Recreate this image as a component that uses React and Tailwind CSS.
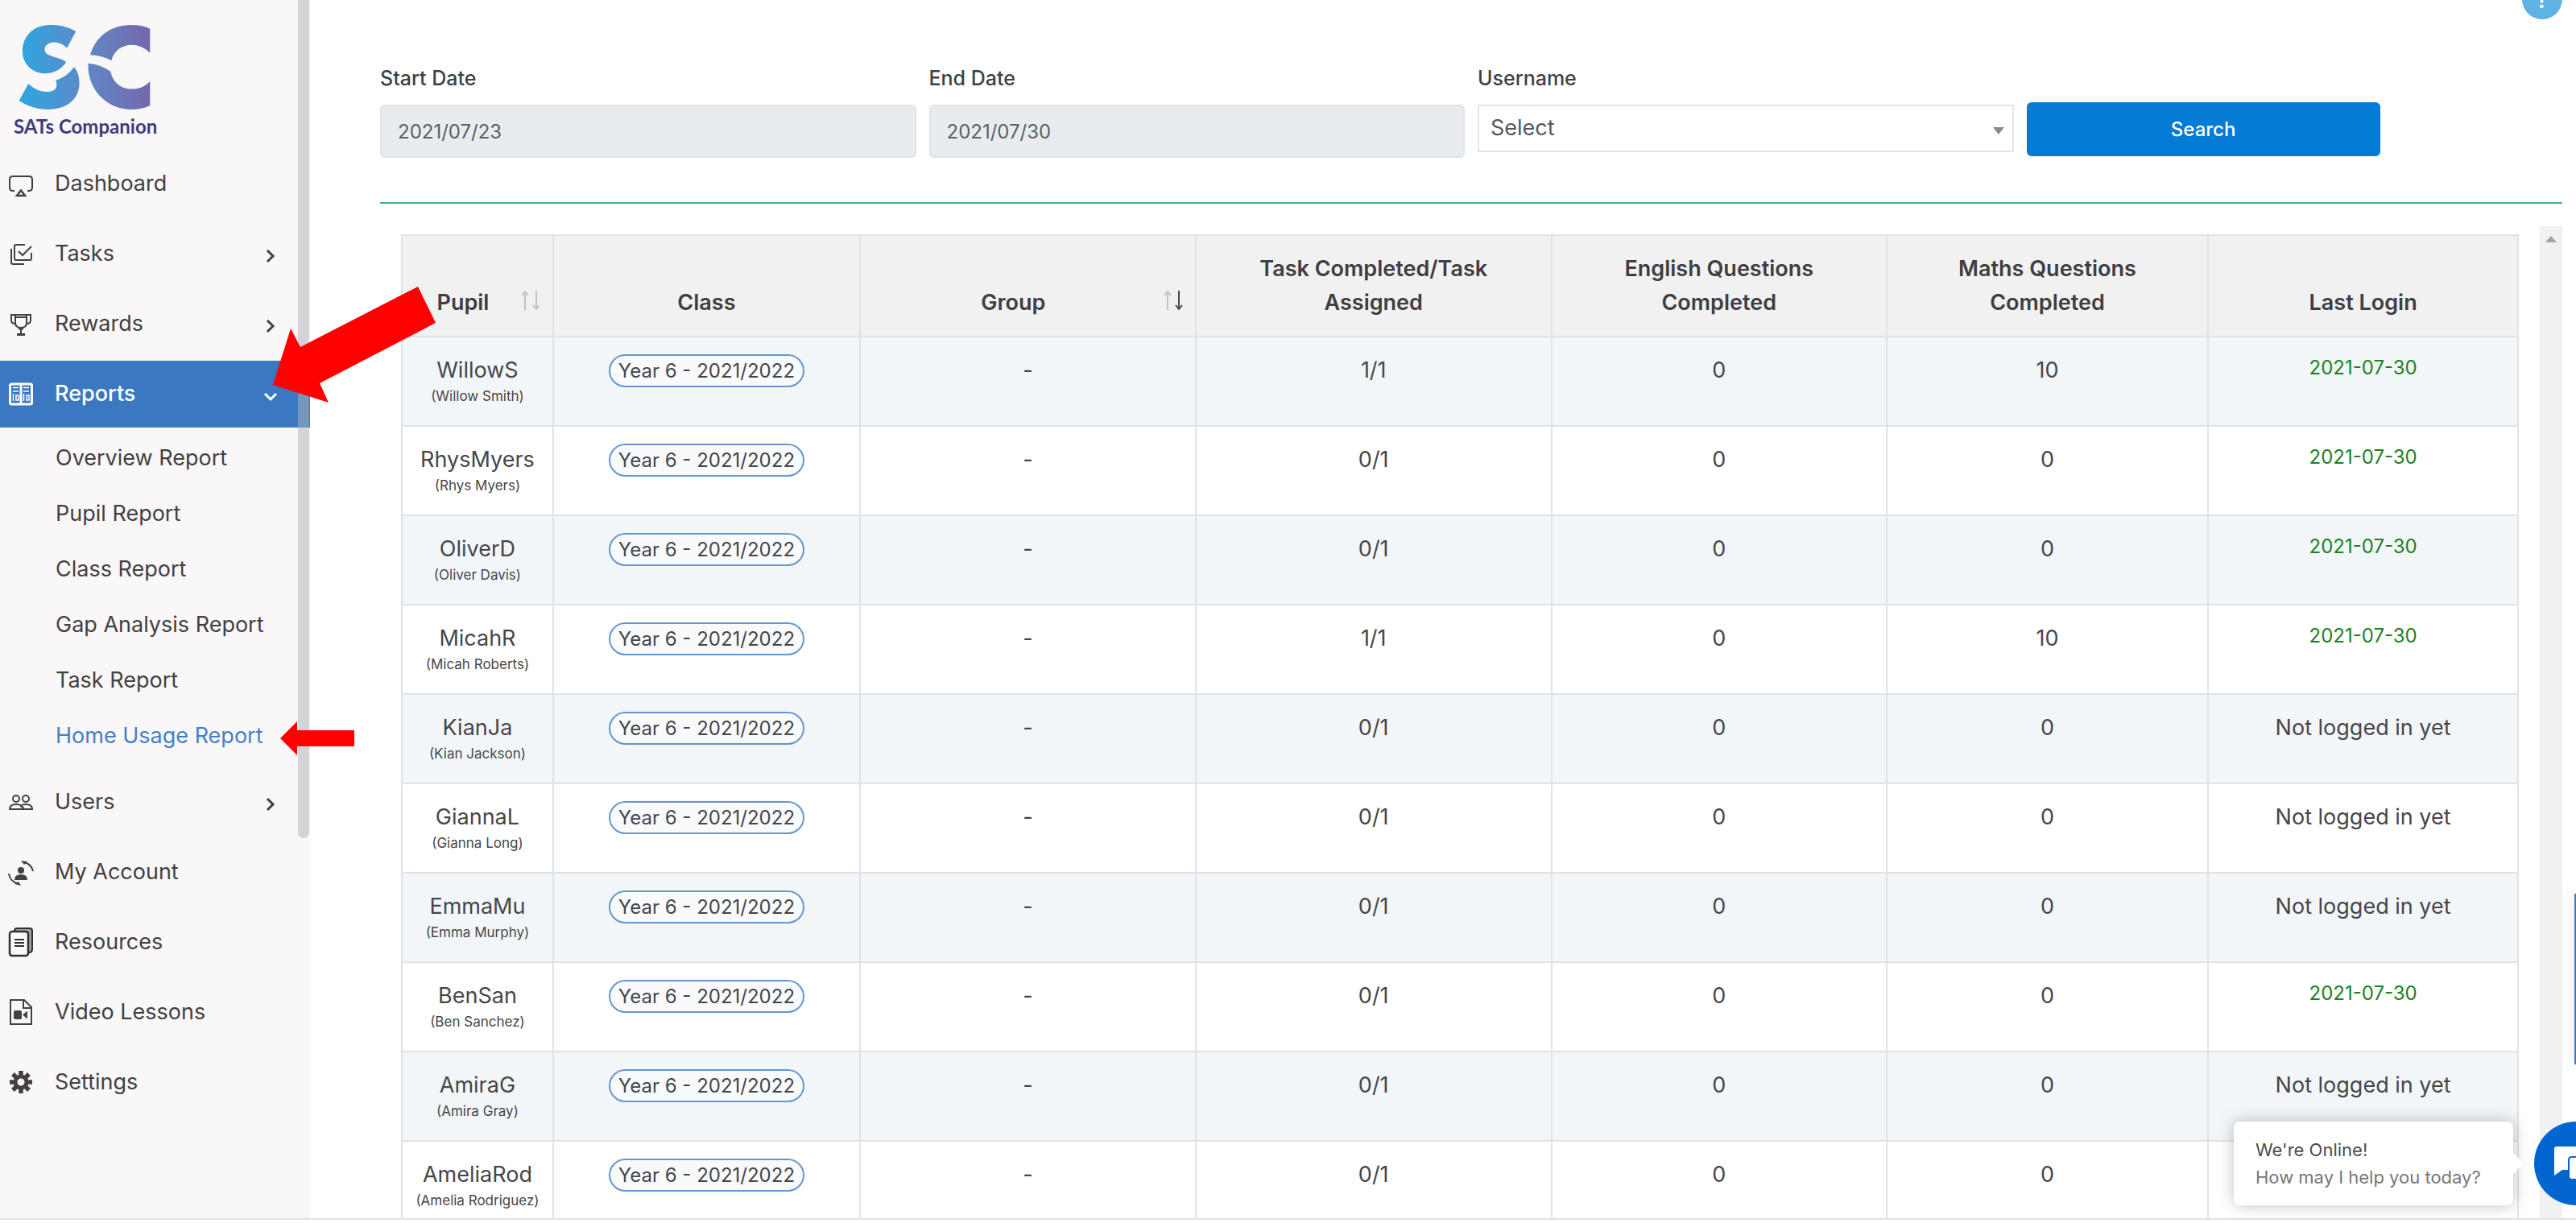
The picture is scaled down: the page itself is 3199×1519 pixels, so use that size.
import React from "react";

const pupils = [
  ["WillowS", "Willow Smith", "1/1", "0", "10", "2021-07-30"],
  ["RhysMyers", "Rhys Myers", "0/1", "0", "0", "2021-07-30"],
  ["OliverD", "Oliver Davis", "0/1", "0", "0", "2021-07-30"],
  ["MicahR", "Micah Roberts", "1/1", "0", "10", "2021-07-30"],
  ["KianJa", "Kian Jackson", "0/1", "0", "0", null],
  ["GiannaL", "Gianna Long", "0/1", "0", "0", null],
  ["EmmaMu", "Emma Murphy", "0/1", "0", "0", null],
  ["BenSan", "Ben Sanchez", "0/1", "0", "0", "2021-07-30"],
  ["AmiraG", "Amira Gray", "0/1", "0", "0", null],
  ["AmeliaRod", "Amelia Rodriguez", "0/1", "0", "0", ""],
];

const subReports = [
  "Overview Report",
  "Pupil Report",
  "Class Report",
  "Gap Analysis Report",
  "Task Report",
  "Home Usage Report",
];

function Icon({ children }) {
  return (
    <svg
      viewBox="0 0 30 30"
      className="size-[30px] shrink-0 overflow-visible"
      fill="none"
      stroke="currentColor"
      strokeWidth="2"
      aria-hidden="true"
    >
      {children}
    </svg>
  );
}

const DashboardIcon = () => (
  <Icon>
    <path d="M7 23H5q-4 0-4-4V9q0-4 4-4h20q4 0 4 4v10q0 4-4 4h-2" />
    <path d="M15 22.500l5 6.500H10z" strokeWidth="2.500" />
  </Icon>
);
const TasksIcon = () => (
  <Icon>
    <path d="M20 3H9q-2 0-2 2v15q0 2 2 2h17q2 0 2-2v-7" />
    <path d="M3 8v17q0 2 2 2h14M12 11l5 5 11-11" />
  </Icon>
);
const RewardsIcon = () => (
  <Icon>
    <path d="M8 3h14v10q0 6-7 6t-7-6zM8 6h14" />
    <path d="M8 3H3v7q0 4 5 4M22 3h5v7q0 4-5 4M12 19l3 3 3-3M15 22v4" />
    <path d="M10 27.500h10" strokeWidth="3" />
  </Icon>
);
const ReportsIcon = () => (
  <Icon>
    <rect x="1.500" y="2" width="27" height="25" rx="2" strokeWidth="3" />
    <path d="M15 2v25" strokeWidth="3" />
    <path d="M5 6.500h7M5 11h7M18 6.500h7M18 11h7" strokeWidth="1.500" />
    <path d="M5.500 14v9M9 16h3v6H9zM18.500 14v9M22 16h3v6h-3z" strokeWidth="1.500" />
  </Icon>
);
const UsersIcon = () => (
  <Icon>
    <circle cx="9" cy="10" r="4" />
    <circle cx="21" cy="10" r="4" />
    <path d="M1 23q0-6 8-6 5 0 6 2 1-2 6-2 8 0 8 6zM15 19q3 1 3 4" />
  </Icon>
);
const AccountIcon = () => (
  <Icon>
    <g fill="currentColor" stroke="none">
      <circle cx="15" cy="12" r="4" />
      <path d="M7 24q0-7 8-7t8 7zM15 0l8 1-4 4zM15 31l-8-2 5-3z" />
    </g>
    <path d="M20 2q8 3 10 11M10 28Q1 25 0 16" />
  </Icon>
);
const ResourcesIcon = () => (
  <Icon>
    <g stroke="#2f3133">
      <path d="M7 0q0-3 3-3h16q3 0 3 3v23q0 4-4 4" fill="#a3a3a3" />
      <rect x="1" y="1" width="23" height="30" rx="3" fill="#faf8f9" strokeWidth="2.500" />
      <path d="M7 11h12M7 15h12M7 19h12" />
    </g>
  </Icon>
);
const VideoIcon = () => (
  <Icon>
    <path d="M2-1h17l9 9v21H2zM18-1v10h10" />
    <rect x="6" y="12" width="10" height="11" rx="2" fill="currentColor" stroke="none" />
    <path d="M17 17.500l6-5v10z" fill="currentColor" stroke="none" />
  </Icon>
);
const SettingsIcon = () => (
  <Icon>
    <circle cx="15" cy="14" r="7" strokeWidth="5" />
    <g strokeWidth="5.500">
      <path d="M15 0v5M15 23v5M1 14h5M24 14h5M5 4l4 4M21 20l4 4M25 4l-4 4M9 20l-4 4" />
    </g>
  </Icon>
);

function Chevron({ down }) {
  return (
    <svg viewBox="0 0 20 20" className="mt-1 ml-auto size-5" fill="none" stroke="currentColor" strokeWidth="3" aria-hidden="true">
      {down ? <path d="M3 7l7 7 7-7" /> : <path d="M6 3l7 7-7 7" />}
    </svg>
  );
}

function NavLink({ icon, label }) {
  return (
    <a href="#" className="flex h-[83px] items-center gap-[27px] pr-11 pl-[11px]">
      {icon}
      <span>{label}</span>
    </a>
  );
}

function NavGroup({ icon, label, open }) {
  return (
    <button
      type="button"
      aria-expanded={!!open}
      className={
        open
          ? "flex h-[83px] w-full items-center gap-[27px] bg-[#3b78c1] pr-[39px] pl-[11px] text-left font-medium text-white"
          : "flex h-[83px] w-full items-center gap-[27px] pr-[39px] pl-[11px] text-left"
      }
    >
      {icon}
      <span>{label}</span>
      <Chevron down={open} />
    </button>
  );
}

function Logo() {
  return (
    <a href="#" className="block w-[180px] pt-[31px] pl-[17px]">
      <svg viewBox="72 33 490 315" className="ml-[7px] h-[105px] w-[163px]" aria-hidden="true">
        <defs>
          <linearGradient id="brand" gradientUnits="userSpaceOnUse" x1="85" y1="0" x2="550" y2="0">
            <stop offset="0" stopColor="#2fa5de" />
            <stop offset="0.450" stopColor="#5a8bc9" />
            <stop offset="0.600" stopColor="#6283c1" />
            <stop offset="1" stopColor="#7668ad" />
          </linearGradient>
        </defs>
        <g fill="url(#brand)">
          <path d="M283 57C250 38 220 33 185 33C125 33 84 75 84 130C84 180 120 212 165 214C200 214 228 200 247 171C225 155 200 154 180 144C158 132 163 100 200 97C220 97 235 105 250 118Z" />
          <path d="M106 252C130 275 155 283 178 282C212 281 216 260 208 239C235 232 258 215 276 190C290 205 296 225 296 250C296 310 250 348 180 348C140 348 100 335 71 315Z" />
          <path d="M337 145C355 80 410 33 490 33C515 33 540 37 560 47V137C540 117 515 107 492 107C455 107 423 130 416 166C392 153 365 146 337 145Z" />
          <path d="M329 176C360 178 390 190 413 207C420 245 450 272 492 272C520 272 542 262 560 243V333C540 343 515 348 490 348C400 348 325 275 329 176Z" />
        </g>
      </svg>
      <span className="mt-1 block h-[47px] font-['Lato',sans-serif] text-[24px] leading-[34px] font-bold whitespace-nowrap text-[#3f3a7d]">
        SATs Companion
      </span>
    </a>
  );
}

function Sidebar() {
  return (
    <aside className="relative w-[385px] shrink-0 bg-[#f9f7f8] text-[27px] text-[#444042]">
      <Logo />
      <nav className="flex flex-col gap-1">
        <NavLink icon={<DashboardIcon />} label="Dashboard" />
        <NavGroup icon={<TasksIcon />} label="Tasks" />
        <NavGroup icon={<RewardsIcon />} label="Rewards" />
        <NavGroup icon={<ReportsIcon />} label="Reports" open />
        <ul className="pb-0.5">
          {subReports.map((name) => (
            <li key={name}>
              <a
                href="#"
                className={
                  name === "Home Usage Report"
                    ? "flex h-[69px] items-center pl-[69px] text-[#467fc8]"
                    : "flex h-[69px] items-center pl-[69px]"
                }
              >
                {name}
              </a>
            </li>
          ))}
        </ul>
        <NavGroup icon={<UsersIcon />} label="Users" />
        <NavLink icon={<AccountIcon />} label="My Account" />
        <NavLink icon={<ResourcesIcon />} label="Resources" />
        <NavLink icon={<VideoIcon />} label="Video Lessons" />
        <NavLink icon={<SettingsIcon />} label="Settings" />
      </nav>
      <div className="absolute top-0 right-px h-[1041px] w-3.5 rounded-b-full bg-[#adb1b8]/50" />
    </aside>
  );
}

function Filters() {
  const label = "block text-[25px] leading-[34px] font-medium text-[#3a4248]";
  const field =
    "mt-4 block h-[66px] w-full rounded-md border-2 border-[#dce4ea] bg-[#e8ecef] px-5 text-[24px] text-[#5c5f63] outline-none";
  return (
    <form className="grid grid-cols-4 gap-4 border-b-2 border-[#3fae9f] pb-[55px]">
      <div>
        <label htmlFor="start" className={label}>Start Date</label>
        <input id="start" type="text" readOnly defaultValue="2021/07/23" className={field} />
      </div>
      <div>
        <label htmlFor="end" className={label}>End Date</label>
        <input id="end" type="text" readOnly defaultValue="2021/07/30" className={field} />
      </div>
      <div>
        <label htmlFor="user" className={label}>Username</label>
        <div className="relative mt-4">
          <select
            id="user"
            className="block h-[59px] w-full appearance-none border-2 border-[#dfe6ed] bg-white px-3.5 text-[27px] text-[#55585b]"
          >
            <option>Select</option>
          </select>
          <svg viewBox="0 0 14 9" className="pointer-events-none absolute top-7 right-3 h-[9px] w-3.5" aria-hidden="true">
            <path d="M0 0h14L7 9z" fill="#888" />
          </svg>
        </div>
      </div>
      <div>
        <button
          type="button"
          className="mt-[47px] h-[67px] w-[66%] rounded-md bg-[#047bd5] text-[24px] font-medium text-white"
        >
          Search
        </button>
      </div>
    </form>
  );
}

function SortArrows({ active }) {
  return (
    <svg viewBox="0 0 26 24" className="absolute right-3.5 bottom-8 h-6 w-[26px]" fill="none" strokeWidth="2" aria-hidden="true">
      <path d="M6 24V2M2 6l4-5 4 5" stroke="#c3c3c6" />
      <path d="M20 0v22M16 18l4 5 4-5" stroke={active ? "#4a4754" : "#c3c3c6"} />
    </svg>
  );
}

function ReportTable() {
  const th = "relative border-2 border-[#dfe3e8] px-4 py-5 text-center align-bottom leading-[42px] font-semibold";
  const td = "border-2 border-[#dfe3e8] pt-[21px] text-center align-top leading-10";
  return (
    <table className="w-full table-fixed border-collapse text-[27px] text-[#46464a]">
      <colgroup>
        <col className="w-[7.15%]" />
        <col className="w-[14.5%]" />
        <col className="w-[15.86%]" />
        <col className="w-[16.82%]" />
        <col className="w-[15.83%]" />
        <col className="w-[15.2%]" />
        <col className="w-[14.64%]" />
      </colgroup>
      <thead className="bg-[#f1f1f1] text-[#403d42]">
        <tr>
          <th className={th}>
            <span className="pr-9">Pupil</span>
            <SortArrows />
          </th>
          <th className={th}>Class</th>
          <th className={th}>
            <span className="pr-9">Group</span>
            <SortArrows active />
          </th>
          <th className={th}>Task Completed/Task<br />Assigned</th>
          <th className={th}>English Questions<br />Completed</th>
          <th className={th}>Maths Questions<br />Completed</th>
          <th className={th}>Last Login</th>
        </tr>
      </thead>
      <tbody>
        {pupils.map(([user, name, tasks, english, maths, login]) => (
          <tr key={user} className="h-[111px] odd:bg-[#f2f6f9]">
            <td className={td}>
              {user}
              <span className="block text-[17px] leading-6 whitespace-nowrap">({name})</span>
            </td>
            <td className={td}>
              <span className="inline-block rounded-full border-2 border-[#6496d0] bg-[#f8fafc] px-2.5 align-top text-[24px] leading-[37px] whitespace-nowrap">
                Year 6 - 2021/2022
              </span>
            </td>
            <td className={td}>-</td>
            <td className={td}>{tasks}</td>
            <td className={td}>{english}</td>
            <td className={td}>{maths}</td>
            <td className={td}>
              {login === null ? (
                "Not logged in yet"
              ) : (
                <span className="block text-[24px] leading-[34px] text-[#1c811f]">{login}</span>
              )}
            </td>
          </tr>
        ))}
      </tbody>
    </table>
  );
}

function ChatWidget() {
  return (
    <div>
      <div className="absolute right-[78px] bottom-4 w-[347px] rounded-lg bg-white px-[27px] py-[18px] shadow-[0_0_20px_rgba(0,0,0,0.25)]">
        <div className="absolute top-10 -right-2 size-6 rotate-45 bg-white" />
        <p className="text-[22px] leading-[34px] text-[#4d4d4d]">We're Online!</p>
        <p className="text-[22px] leading-[34px] whitespace-nowrap text-[#777]">How may I help you today?</p>
      </div>
      <button
        type="button"
        aria-label="Open chat"
        className="absolute -right-[52px] bottom-4 size-[104px] rounded-full bg-[#0365d0]"
      >
        <svg viewBox="0 0 104 104" className="size-full" aria-hidden="true">
          <path d="M25 34q0-3 3-3h34v29H35l-10 7z" fill="#fff" />
          <path d="M43 48q0-4 4-4h28v33l-9-5H47q-4 0-4-4z" fill="#fff" stroke="#0365d0" strokeWidth="2" />
        </svg>
      </button>
    </div>
  );
}

export default function App() {
  return (
    <div className="relative flex h-screen flex-col overflow-hidden bg-white pb-1 font-['Inter',sans-serif]">
      <div className="relative flex min-h-0 flex-1 overflow-hidden border-b-2 border-[#e0e0e6]">
        <Sidebar />
        <main className="flex min-w-0 flex-1 flex-col pt-20 pr-[17px] pl-[87px]">
          <Filters />
          <div className="mt-7 flex min-h-0 flex-1">
            <div className="min-w-0 flex-1 overflow-hidden px-[26px] pt-2.5">
              <ReportTable />
            </div>
            <div className="w-7 bg-[#f1f1f1] pt-3">
              <svg viewBox="0 0 14 8" className="mx-auto h-2 w-3.5" aria-hidden="true">
                <path d="M7 0l7 8H0z" fill="#a3a3a3" />
              </svg>
            </div>
          </div>
        </main>
        <button
          type="button"
          aria-label="Help"
          className="absolute -top-[26px] right-[17px] flex size-[50px] items-center justify-center rounded-full bg-[#5fb3e3] text-[30px] font-medium text-white"
        >
          ?
        </button>
        <div className="absolute top-[1110px] right-0 h-[212px] w-0.5 bg-[#4179bd] shadow-[0_0_16px_rgba(0,0,0,0.35)]" />
        <ChatWidget />
      </div>
      <svg viewBox="0 0 202 144" className="absolute top-[356px] left-[339px] h-[144px] w-[202px]" aria-hidden="true">
        <path d="M180 0l22 45L58 120l11 24L0 122 22 52l12 23z" fill="red" />
      </svg>
      <svg viewBox="0 0 92 42" className="absolute top-[896px] left-[348px] h-[42px] w-[92px]" aria-hidden="true">
        <path d="M0 21L21 0v11h71v20H21v11z" fill="red" />
      </svg>
    </div>
  );
}
